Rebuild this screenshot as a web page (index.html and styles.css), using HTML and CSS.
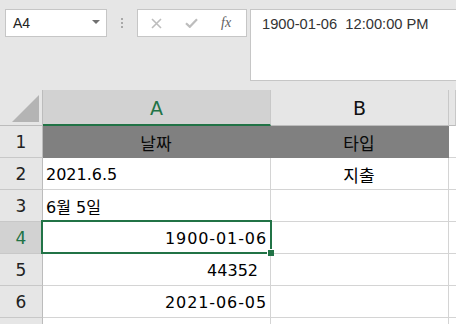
FILE: index.html
```html
<!DOCTYPE html>
<html>
<head>
<meta charset="utf-8">
<link rel="stylesheet" href="styles.css">
</head>
<body>
<div class="app">
  <div class="toolbar">
    <div class="namebox"><span class="ref">A4</span><span class="caret"></span></div>
    <div class="grip"><i></i><i></i><i></i></div>
    <div class="fxbox">
      <svg class="ico-x" width="11" height="11" viewBox="0 0 11 11"><path d="M1 1L10 10M10 1L1 10" stroke="#bdbdbd" stroke-width="1.6" fill="none"/></svg>
      <svg class="ico-ok" width="13" height="10" viewBox="0 0 13 10"><path d="M1 5.2L4.8 8.8L12 1.2" stroke="#bdbdbd" stroke-width="2.2" fill="none"/></svg>
      <span class="fx">fx</span>
    </div>
    <div class="formula">1900-01-06&nbsp;&nbsp;12:00:00 PM</div>
  </div>
  <div class="sheet">
    <div class="row head">
      <div class="rh corner"><svg width="28" height="27" viewBox="0 0 28 27"><path d="M27 0V27H0Z" fill="#b4b4b4"/></svg></div>
      <div class="ch ca sel">A</div>
      <div class="ch cb">B</div>
      <div class="ch cc"></div>
    </div>
    <div class="row r1">
      <div class="rh">1</div>
      <div class="cell ca fill center ko">날짜</div>
      <div class="cell cb fill center ko">타입</div>
      <div class="cell cc"></div>
    </div>
    <div class="row">
      <div class="rh">2</div>
      <div class="cell ca">2021.6.5</div>
      <div class="cell cb center ko">지출</div>
      <div class="cell cc"></div>
    </div>
    <div class="row">
      <div class="rh">3</div>
      <div class="cell ca">6월 5일</div>
      <div class="cell cb"></div>
      <div class="cell cc"></div>
    </div>
    <div class="row">
      <div class="rh rsel">4</div>
      <div class="cell ca right date">1900-01-06</div>
      <div class="cell cb"></div>
      <div class="cell cc"></div>
    </div>
    <div class="row">
      <div class="rh">5</div>
      <div class="cell ca right num">44352</div>
      <div class="cell cb"></div>
      <div class="cell cc"></div>
    </div>
    <div class="row">
      <div class="rh">6</div>
      <div class="cell ca right date">2021-06-05</div>
      <div class="cell cb"></div>
      <div class="cell cc"></div>
    </div>
    <div class="row">
      <div class="rh"></div>
      <div class="cell ca"></div>
      <div class="cell cb"></div>
      <div class="cell cc"></div>
    </div>
    <div class="selection"></div>
    <div class="handle"></div>
  </div>
</div>
</body>
</html>
```
FILE: styles.css
```css
* { box-sizing: border-box; }
html, body { margin: 0; padding: 0; }
body {
  width: 456px;
  height: 324px;
  overflow: hidden;
  background: #e6e6e6;
  font-family: "DejaVu Sans", "Noto Sans CJK KR", sans-serif;
}
.app { width: 456px; height: 324px; overflow: hidden; }

.toolbar {
  height: 90px;
  display: flex;
  align-items: flex-start;
  padding: 9px 0 0 5px;
}
.namebox {
  width: 102px;
  height: 28px;
  background: #fff;
  border: 1px solid #c6c6c6;
  display: flex;
  align-items: center;
  justify-content: space-between;
  padding: 0 6px 0 7px;
}
.ref {
  font-family: "Liberation Sans", Arial, sans-serif;
  font-size: 14px;
  color: #222;
}
.caret {
  width: 0;
  height: 0;
  border-left: 4px solid transparent;
  border-right: 4px solid transparent;
  border-top: 4px solid #707070;
  margin-top: -2px;
}
.grip {
  width: 30px;
  display: flex;
  flex-direction: column;
  align-items: center;
  gap: 2px;
  padding-top: 9px;
}
.grip i {
  display: block;
  width: 2px;
  height: 2px;
  background: #a8a8a8;
}
.fxbox {
  width: 110px;
  height: 28px;
  background: #fff;
  border: 1px solid #c6c6c6;
  display: flex;
  align-items: center;
  padding-left: 13px;
  margin-right: 3px;
}
.ico-ok { margin-left: 23px; }
.fx {
  margin-left: 23px;
  font-family: "Liberation Serif", "Times New Roman", serif;
  font-style: italic;
  font-size: 14px;
  color: #606060;
}
.formula {
  flex: 1;
  height: 72px;
  background: #fff;
  border: 1px solid #c6c6c6;
  border-right: none;
  padding: 6px 0 0 11px;
  font-family: "Liberation Sans", Arial, sans-serif;
  font-size: 14.7px;
  line-height: 17px;
  color: #333;
  white-space: nowrap;
}

.sheet { position: relative; background: #fff; height: 234px; }
.row {
  display: flex;
  height: 32px;
}
.row.head { height: 36px; }
.rh {
  width: 43px;
  flex: none;
  background: #e6e6e6;
  border-right: 1px solid #bcbcbc;
  border-bottom: 1px solid #c8c8c8;
  display: flex;
  align-items: center;
  justify-content: center;
  font-size: 17px;
  color: #222;
}
.rh.rsel { background: #d2d2d2; color: #217346; }
.corner {
  border-bottom-color: #bcbcbc;
  align-items: flex-start;
  justify-content: flex-start;
  padding: 5px 0 0 12px;
}
.ca { width: 228px; flex: none; }
.cb { width: 178px; flex: none; }
.cc { flex: 1; }
.ch {
  background: #e6e6e6;
  border-right: 1px solid #c8c8c8;
  border-bottom: 1px solid #bcbcbc;
  display: flex;
  align-items: center;
  justify-content: center;
  font-size: 19px;
  color: #111;
  padding-top: 1px;
}
.ch.sel {
  background: #d2d2d2;
  color: #217346;
  border-bottom: 2px solid #217346;
}
.cell {
  border-right: 1px solid #d4d4d4;
  border-bottom: 1px solid #d4d4d4;
  display: flex;
  align-items: center;
  padding: 1px 4px 0 3px;
  font-size: 16px;
  color: #000;
  white-space: nowrap;
}
.cell.ko { font-size: 17px; }
.cell.fill { background: #808080; border-color: #808080; color: #0a0a0a; }
.center { justify-content: center; }
.right { justify-content: flex-end; }
.cell.date { letter-spacing: 0.9px; padding-right: 3px; }
.cell.num { padding-right: 12px; }

.selection {
  position: absolute;
  left: 41px;
  top: 130px;
  width: 231px;
  height: 34px;
  border: 2px solid #217346;
}
.handle {
  position: absolute;
  left: 268px;
  top: 160px;
  width: 6px;
  height: 6px;
  background: #217346;
  box-shadow: -1px -1px 0 #fff;
}
```
